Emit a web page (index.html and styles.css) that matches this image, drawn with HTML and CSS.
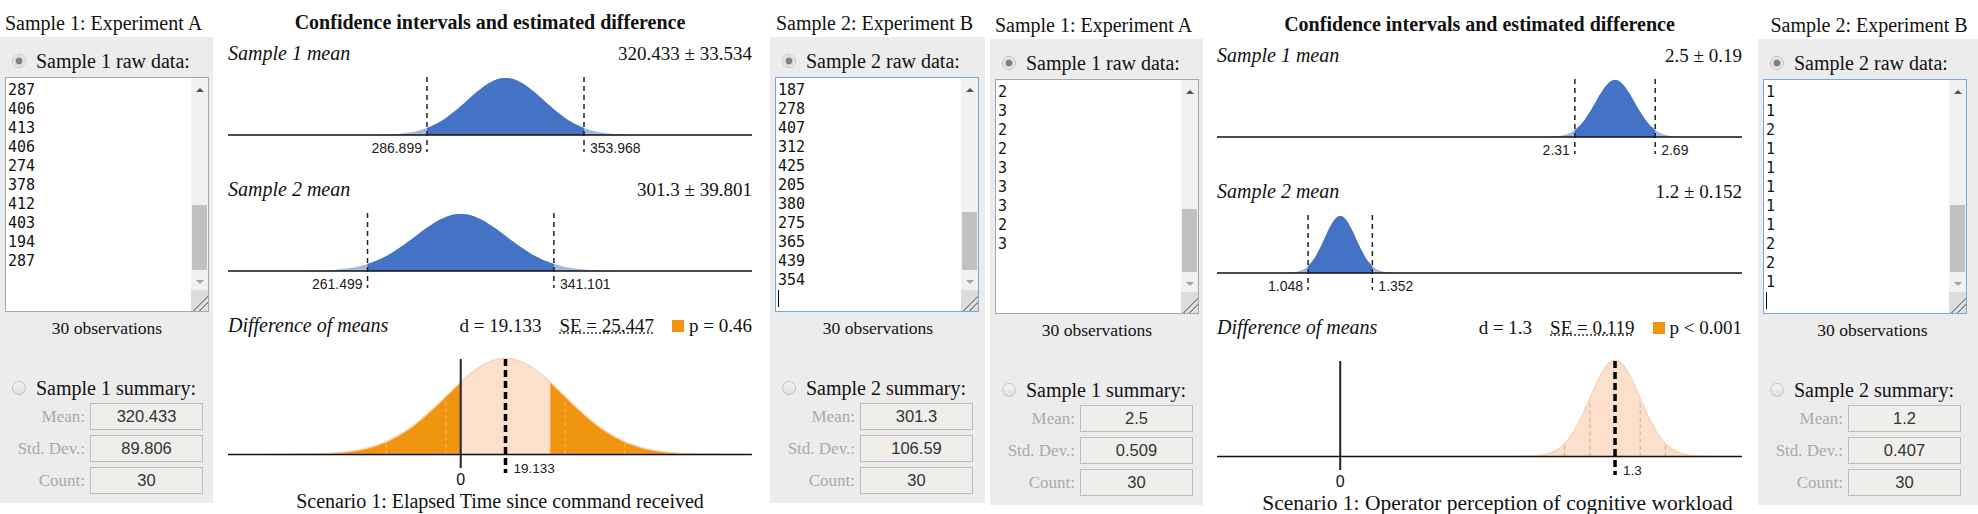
FILE: index.html
```html
<!DOCTYPE html>
<html>
<head>
    <link rel="stylesheet" href="styles.css">
</head>
<body>
    <div class="screens">
        <!-- Scenario 1: elapsed time -->
        <div class="screen screen-a">
            <div class="sample">
                <h2 class="sample-title">Sample 1: Experiment A</h2>
                <div class="sample-panel">
                    <label class="choice"><input type="radio" name="a1" checked>Sample 1 raw data:</label>
                    <div class="raw-box">
                        <div class="raw-lines">287
                            406
                            413
                            406
                            274
                            378
                            412
                            403
                            194
                            287</div>
                        <div class="scrollbar">
                            <span class="sb-btn sb-up"></span>
                            <span class="sb-track"><span class="sb-thumb" style="height: 65px"></span></span>
                            <span class="sb-btn sb-down"></span>
                            <span class="sb-grip"></span>
                        </div>
                    </div>
                    <p class="obs">30 observations</p>
                    <label class="choice choice-summary"><input type="radio" name="a1">Sample 1 summary:</label>
                    <div class="summary">
                        <span>Mean:</span><input value="320.433" readonly>
                        <span>Std. Dev.:</span><input value="89.806" readonly>
                        <span>Count:</span><input value="30" readonly>
                    </div>
                </div>
            </div>

            <div class="chart" id="chart-a">
                <h1 class="chart-title">Confidence intervals and estimated difference</h1>
                <div class="row"><span class="row-name">Sample 1 mean</span><span class="row-value">320.433 ± 33.534</span></div>
                <svg class="bell-plot"></svg>
                <div class="row"><span class="row-name">Sample 2 mean</span><span class="row-value">301.3 ± 39.801</span></div>
                <svg class="bell-plot"></svg>
                <div class="row">
                    <span class="row-name">Difference of means</span>
                    <span class="diff-stats">
                        <span>d = 19.133</span>
                        <abbr title="Standard error of the difference">SE = 25.447</abbr>
                        <span class="p-value"><i class="swatch"></i>p = 0.46</span>
                    </span>
                </div>
                <svg class="diff-plot"></svg>
                <div class="scenario">Scenario 1: Elapsed Time since command received</div>
            </div>

            <div class="sample sample-wide">
                <h2 class="sample-title">Sample 2: Experiment B</h2>
                <div class="sample-panel">
                    <label class="choice"><input type="radio" name="a2" checked>Sample 2 raw data:</label>
                    <div class="raw-box focused">
                        <div class="raw-lines">187
                            278
                            407
                            312
                            425
                            205
                            380
                            275
                            365
                            439
                            354
                            <span class="caret"></span></div>
                        <div class="scrollbar">
                            <span class="sb-btn sb-up"></span>
                            <span class="sb-track"><span class="sb-thumb" style="height: 58px"></span></span>
                            <span class="sb-btn sb-down"></span>
                            <span class="sb-grip"></span>
                        </div>
                    </div>
                    <p class="obs">30 observations</p>
                    <label class="choice choice-summary"><input type="radio" name="a2">Sample 2 summary:</label>
                    <div class="summary">
                        <span>Mean:</span><input value="301.3" readonly>
                        <span>Std. Dev.:</span><input value="106.59" readonly>
                        <span>Count:</span><input value="30" readonly>
                    </div>
                </div>
            </div>
        </div>

        <!-- Scenario 1: cognitive workload -->
        <div class="screen screen-b">
            <div class="sample">
                <h2 class="sample-title">Sample 1: Experiment A</h2>
                <div class="sample-panel">
                    <label class="choice"><input type="radio" name="b1" checked>Sample 1 raw data:</label>
                    <div class="raw-box">
                        <div class="raw-lines">2
                            3
                            2
                            2
                            3
                            3
                            3
                            2
                            3</div>
                        <div class="scrollbar">
                            <span class="sb-btn sb-up"></span>
                            <span class="sb-track"><span class="sb-thumb" style="height: 63px"></span></span>
                            <span class="sb-btn sb-down"></span>
                            <span class="sb-grip"></span>
                        </div>
                    </div>
                    <p class="obs">30 observations</p>
                    <label class="choice choice-summary"><input type="radio" name="b1">Sample 1 summary:</label>
                    <div class="summary">
                        <span>Mean:</span><input value="2.5" readonly>
                        <span>Std. Dev.:</span><input value="0.509" readonly>
                        <span>Count:</span><input value="30" readonly>
                    </div>
                </div>
            </div>

            <div class="chart" id="chart-b">
                <h1 class="chart-title">Confidence intervals and estimated difference</h1>
                <div class="row"><span class="row-name">Sample 1 mean</span><span class="row-value">2.5 ± 0.19</span></div>
                <svg class="bell-plot"></svg>
                <div class="row"><span class="row-name">Sample 2 mean</span><span class="row-value">1.2 ± 0.152</span></div>
                <svg class="bell-plot"></svg>
                <div class="row">
                    <span class="row-name">Difference of means</span>
                    <span class="diff-stats">
                        <span>d = 1.3</span>
                        <abbr title="Standard error of the difference">SE = 0.119</abbr>
                        <span class="p-value"><i class="swatch"></i>p &lt; 0.001</span>
                    </span>
                </div>
                <svg class="diff-plot"></svg>
                <div class="scenario">Scenario 1: Operator perception of cognitive workload</div>
            </div>

            <div class="sample sample-wide">
                <h2 class="sample-title">Sample 2: Experiment B</h2>
                <div class="sample-panel">
                    <label class="choice"><input type="radio" name="b2" checked>Sample 2 raw data:</label>
                    <div class="raw-box focused">
                        <div class="raw-lines">1
                            1
                            2
                            1
                            1
                            1
                            1
                            1
                            2
                            2
                            1
                            <span class="caret"></span></div>
                        <div class="scrollbar">
                            <span class="sb-btn sb-up"></span>
                            <span class="sb-track"><span class="sb-thumb" style="height: 67px"></span></span>
                            <span class="sb-btn sb-down"></span>
                            <span class="sb-grip"></span>
                        </div>
                    </div>
                    <p class="obs">30 observations</p>
                    <label class="choice choice-summary"><input type="radio" name="b2">Sample 2 summary:</label>
                    <div class="summary">
                        <span>Mean:</span><input value="1.2" readonly>
                        <span>Std. Dev.:</span><input value="0.407" readonly>
                        <span>Count:</span><input value="30" readonly>
                    </div>
                </div>
            </div>
        </div>
    </div>

    <script>
        const SVG_NS = 'http://www.w3.org/2000/svg';

        // domain = axis range in data units, samples as shown in the side panels
        const charts = {
            'chart-a': {
                domain: [201.893, 425.729],
                samples: [
                    { mean: 320.433, sd: 89.806, n: 30, lo: 286.899, hi: 353.968 },
                    { mean: 301.3, sd: 106.59, n: 30, lo: 261.499, hi: 341.101 }
                ],
                se: 25.447
            },
            'chart-b': {
                domain: [0.6171, 3.1006],
                samples: [
                    { mean: 2.5, sd: 0.509, n: 30, lo: 2.31, hi: 2.69 },
                    { mean: 1.2, sd: 0.407, n: 30, lo: 1.048, hi: 1.352 }
                ],
                se: 0.119
            }
        };

        function add(parent, name, attrs, text) {
            const node = document.createElementNS(SVG_NS, name);
            Object.entries(attrs).forEach(([k, v]) => node.setAttribute(k, v));
            if (text !== undefined) node.textContent = text;
            parent.appendChild(node);
            return node;
        }

        function bellPath(cx, sigma, height, base) {
            let d = `M${(cx - 4 * sigma).toFixed(1)},${base}`;
            for (let z = -4; z <= 4.001; z += 0.05) {
                const y = base - height * Math.exp(-z * z / 2);
                d += ` L${(cx + z * sigma).toFixed(1)},${y.toFixed(1)}`;
            }
            return d + ` L${(cx + 4 * sigma).toFixed(1)},${base} Z`;
        }

        Object.entries(charts).forEach(([id, c]) => {
            const chart = document.getElementById(id);
            const width = chart.clientWidth;
            const x = v => (v - c.domain[0]) / (c.domain[1] - c.domain[0]) * width;

            // sample means
            chart.querySelectorAll('.bell-plot').forEach((svg, i) => {
                const s = c.samples[i];
                const base = 69;
                const cx = x(s.mean);
                const sigma = x(s.mean + s.sd / Math.sqrt(s.n)) - cx;
                const path = bellPath(cx, sigma, 57, base);
                svg.setAttribute('viewBox', `0 0 ${width} 110`);

                add(svg, 'path', { d: path, class: 'bell-tail' });
                const clip = add(svg, 'clipPath', { id: `${id}-ci${i}` });
                add(clip, 'rect', { x: x(s.lo), y: 0, width: x(s.hi) - x(s.lo), height: base });
                add(svg, 'path', { d: path, class: 'bell', 'clip-path': `url(#${id}-ci${i})` });
                add(svg, 'line', { x1: 0, y1: base, x2: width, y2: base, class: 'axis' });

                [[s.lo, 'end', -5], [s.hi, 'start', 6]].forEach(([v, anchor, dx]) => {
                    add(svg, 'line', { x1: x(v), y1: 11, x2: x(v), y2: 86, class: 'ci-line' });
                    add(svg, 'text', { x: x(v) + dx, y: 87, 'text-anchor': anchor, class: 'ci-label' }, String(v));
                });
            });

            // difference: 0 sits under sample 2 mean, d under sample 1 mean
            const svg = chart.querySelector('.diff-plot');
            const [s1, s2] = c.samples;
            const base = 116.5;
            const height = 96;
            const x0 = x(s2.mean);
            const xd = x(s1.mean);
            const sigma = x(s2.mean + c.se) - x0;
            const path = bellPath(xd, sigma, height, base);
            const left = Math.min(x0, 2 * xd - x0);
            const right = Math.max(x0, 2 * xd - x0);
            svg.setAttribute('viewBox', `0 0 ${width} 152`);

            add(svg, 'path', { d: path, class: 'diff-tail' });
            const clip = add(svg, 'clipPath', { id: `${id}-p` });
            add(clip, 'rect', { x: left, y: 0, width: right - left, height: base });
            add(svg, 'path', { d: path, class: 'diff-body', 'clip-path': `url(#${id}-p)` });

            [-2, -1, 1, 2].forEach(z => {
                const gx = xd + z * sigma;
                const gy = base - height * Math.exp(-z * z / 2);
                const inside = gx > left && gx < right;
                add(svg, 'line', { x1: gx, y1: base, x2: gx, y2: gy + 2, class: inside ? 'guide' : 'guide guide-out' });
            });

            add(svg, 'path', { d: path, class: 'diff-edge' });
            add(svg, 'line', { x1: 0, y1: base, x2: width, y2: base, class: 'axis' });
            add(svg, 'line', { x1: x0, y1: 21, x2: x0, y2: 130, class: 'zero-line' });
            add(svg, 'line', { x1: xd, y1: 21, x2: xd, y2: 135, class: 'd-line' });
            add(svg, 'text', { x: xd + 8, y: 135, class: 'd-label' }, String(+(s1.mean - s2.mean).toFixed(3)));
            add(svg, 'text', { x: x0, y: 147, class: 'zero-label' }, '0');
        });
    </script>
</body>
</html>
```

FILE: styles.css
```css
body {
    margin: 0;
    width: 1978px;
    height: 514px;
    overflow: hidden;
    background: #fff;
    color: #111;
    font-family: "Liberation Serif", "Times New Roman", serif;
}

.screens {
    display: flex;
}

.screen {
    display: flex;
    align-items: flex-start;
    flex: none;
}

.screen-a {
    width: 990px;
}

.screen-b {
    padding-top: 2px;
}

/* Sample columns */
.sample {
    flex: none;
    width: 213px;
}

.sample-wide {
    width: 215px;
    margin-left: 18px;
}

.screen-b .sample-wide {
    width: 228px;
    margin-left: 16px;
}

.sample-title {
    margin: 0;
    padding: 10px 6px 0 0;
    font-size: 20px;
    font-weight: normal;
    line-height: 26px;
    text-align: center;
}

.sample-panel {
    margin-top: 1px;
    padding: 11px 4px 9px 5px;
    background: #ececec;
}

.choice {
    display: flex;
    align-items: center;
    height: 26px;
    font-size: 20px;
    line-height: 26px;
}

.choice input {
    appearance: none;
    flex: none;
    width: 14px;
    height: 14px;
    margin: 0 10px 0 7px;
    border: 1px solid #c2c2c2;
    border-radius: 50%;
    background: linear-gradient(#f5f5f5, #dddddd);
}

.choice input:checked {
    background: radial-gradient(circle, #808080 0 3px, #d2d2d2 3.6px, #f3f3f3 6px);
}

.choice-summary {
    margin-top: 35px;
}

/* Fake textarea with a classic scrollbar */
.raw-box {
    display: flex;
    box-sizing: border-box;
    width: 204px;
    height: 235px;
    margin-top: 3px;
    border: 1px solid #a7a7a7;
    background: #fff;
}

.raw-box.focused {
    border-color: #7ea7d8;
}

.raw-lines {
    flex: 1;
    padding: 3px 0 0 2px;
    font-family: "DejaVu Sans Mono", Consolas, monospace;
    font-size: 15px;
    line-height: 19px;
    white-space: pre-line;
    overflow: hidden;
}

.caret {
    display: inline-block;
    width: 1px;
    height: 17px;
    background: #000;
    vertical-align: -3px;
}

.scrollbar {
    display: flex;
    flex-direction: column;
    width: 17px;
    background: #f1f1f1;
}

.sb-btn {
    display: flex;
    align-items: center;
    justify-content: center;
    height: 17px;
}

.sb-up::before,
.sb-down::before {
    content: "";
    border: 4px solid transparent;
}

.sb-up::before {
    border-top: 0;
    border-bottom-color: #505050;
    margin-top: 6px;
}

.sb-down::before {
    border-bottom: 0;
    border-top-color: #a3a3a3;
}

.sb-track {
    display: flex;
    flex: 1;
    flex-direction: column;
    justify-content: flex-end;
    padding-bottom: 3px;
}

.sb-thumb {
    margin: 0 1px;
    background: #c1c1c1;
}

.sb-grip {
    height: 21px;
    background:
        linear-gradient(135deg, transparent 0 60%, #8c8c8c 60% 64%, #f4f4f4 64% 67%, transparent 67% 76%, #8c8c8c 76% 80%, #f4f4f4 80% 83%, transparent 83%),
        #dcdcdc;
}

.obs {
    margin: 4px 0 0;
    font-size: 17.5px;
    line-height: 24px;
    text-align: center;
}

.summary {
    display: grid;
    grid-template-columns: 80px 113px;
    gap: 5px;
    align-items: center;
    margin-top: 2px;
}

.summary span {
    color: #aaa;
    font-size: 17px;
    text-align: right;
}

.summary input {
    box-sizing: border-box;
    width: 113px;
    height: 27px;
    padding: 0;
    border: 1px solid #bcbcbc;
    background: #efeeea;
    color: #333;
    font-family: "Liberation Sans", Arial, sans-serif;
    font-size: 16.5px;
    text-align: center;
}

/* Chart column */
.chart {
    flex: none;
    width: 524px;
    margin-left: 15px;
    padding-top: 9px;
}

.screen-b .chart {
    width: 525px;
    margin-left: 14px;
}

.chart-title {
    margin: 0 0 5px;
    font-size: 20px;
    font-weight: bold;
    line-height: 26px;
    text-align: center;
}

.row {
    display: flex;
    justify-content: space-between;
    align-items: baseline;
    height: 26px;
    line-height: 26px;
}

.row-name {
    font-size: 20px;
    font-style: italic;
}

.row-value {
    font-size: 19px;
}

.diff-stats {
    display: flex;
    align-items: baseline;
    gap: 18px;
    font-size: 19px;
}

.diff-stats abbr {
    text-decoration: underline dotted #666;
    text-underline-offset: 1px;
}

.p-value {
    display: flex;
    align-items: baseline;
    gap: 5px;
}

.swatch {
    display: inline-block;
    width: 12px;
    height: 12px;
    margin-bottom: 1px;
    background: #f0950f;
}

.bell-plot {
    display: block;
    width: 100%;
    height: 110px;
}

.diff-plot {
    display: block;
    width: 100%;
    height: 152px;
}

.scenario {
    padding-left: 20px;
    font-size: 20px;
    line-height: 22px;
    text-align: center;
    white-space: nowrap;
}

.screen-b .scenario {
    padding-left: 36px;
    font-size: 21.5px;
}

/* SVG parts */
.bell-tail {
    fill: #4472c4;
    opacity: 0.5;
}

.bell {
    fill: #4472c4;
}

.axis {
    stroke: #111;
    stroke-width: 1.5;
}

.ci-line {
    stroke: #222;
    stroke-width: 1.5;
    stroke-dasharray: 5 4;
}

.ci-label {
    fill: #222;
    font-family: "Liberation Sans", Arial, sans-serif;
    font-size: 14px;
}

.diff-tail {
    fill: #f0950f;
}

.diff-body {
    fill: #fce0cb;
}

.diff-edge {
    fill: none;
    stroke: #f8d4b8;
    stroke-width: 1.5;
}

.guide {
    stroke: #bcaea4;
    stroke-width: 1;
    stroke-dasharray: 4 3;
}

.guide-out {
    stroke: #f6bd6c;
}

.zero-line {
    stroke: #222;
    stroke-width: 2;
}

.d-line {
    stroke: #000;
    stroke-width: 3.5;
    stroke-dasharray: 7 4;
}

.d-label {
    fill: #222;
    font-family: "Liberation Sans", Arial, sans-serif;
    font-size: 13.5px;
}

.zero-label {
    fill: #111;
    font-family: "Liberation Sans", Arial, sans-serif;
    font-size: 16px;
    text-anchor: middle;
}
```
